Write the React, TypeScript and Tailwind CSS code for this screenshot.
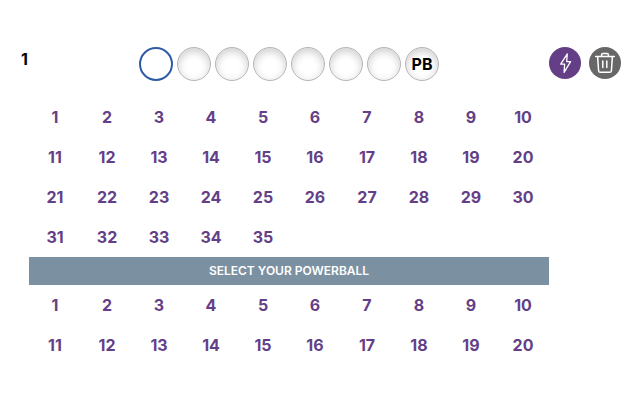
import { useState } from "react";

const range = (n: number) => Array.from({ length: n }, (_, i) => i + 1);

function Ball({ active, label, name, onSelect }: { active: boolean; label?: string; name: string; onSelect: () => void }) {
  return (
    <button
      type="button"
      aria-label={name}
      onClick={onSelect}
      className={`flex size-[34px] items-center justify-center rounded-full text-base font-bold text-black ${
        active
          ? "border-2 border-[#2f5ba5] bg-white"
          : "border border-[#b4b4b4] bg-white shadow-[inset_0_3px_8px_rgba(0,0,0,0.2)]"
      }`}
    >
      {label}
    </button>
  );
}

function NumberGrid({ count, name }: { count: number; name: string }) {
  return (
    <div role="group" aria-label={name} className="grid grid-cols-10">
      {range(count).map((n) => (
        <button key={n} type="button" className="h-10 text-base font-bold text-[#643f87]">
          {n}
        </button>
      ))}
    </div>
  );
}

export default function App() {
  const [slot, setSlot] = useState(0);

  return (
    <main className="grid grid-cols-[8px_1fr_72px] items-start gap-y-4 bg-white pt-[47px] pr-4 pb-9 pl-[21px] font-['Inter',sans-serif]">
      <span className="text-base font-bold text-black">1</span>
      <div className="flex justify-center gap-1">
        {range(7).map((n) => (
          <Ball key={n} name={`Number ${n}`} active={slot === n - 1} onSelect={() => setSlot(n - 1)} />
        ))}
        <Ball name="PB" label="PB" active={slot === 7} onSelect={() => setSlot(7)} />
      </div>
      <div className="flex justify-end gap-2">
        <button type="button" aria-label="Quick pick" className="size-8 rounded-full bg-[#643f87]">
          <svg viewBox="0 0 32 32" fill="none" stroke="white" strokeWidth="1.3" strokeLinejoin="round">
            <path d="M18.3 6.8 11.7 17.2h3.9l-.5 8.2L21.6 14.6H17.7Z" />
          </svg>
        </button>
        <button type="button" aria-label="Delete" className="size-8 rounded-full bg-[#676767]">
          <svg viewBox="0 0 32 32" fill="none" stroke="white" strokeWidth="1.5" strokeLinecap="round" strokeLinejoin="round">
            <path d="M6.7 9.4h18.6M12.6 9V7.8q0-1.2 1.2-1.2h4.4q1.2 0 1.2 1.2V9M8.6 9.6l1 14.1q.1 1.6 1.7 1.6h9.4q1.6 0 1.7-1.6l1-14.1M13.8 14v6.5M17.8 14v6.5" />
          </svg>
        </button>
      </div>
      <section className="col-start-2">
        <NumberGrid count={35} name="Main numbers" />
        <h2 className="bg-[#7b90a1] text-center text-xs leading-7 font-semibold text-white">SELECT YOUR POWERBALL</h2>
        <NumberGrid count={20} name="Powerball" />
      </section>
    </main>
  );
}
